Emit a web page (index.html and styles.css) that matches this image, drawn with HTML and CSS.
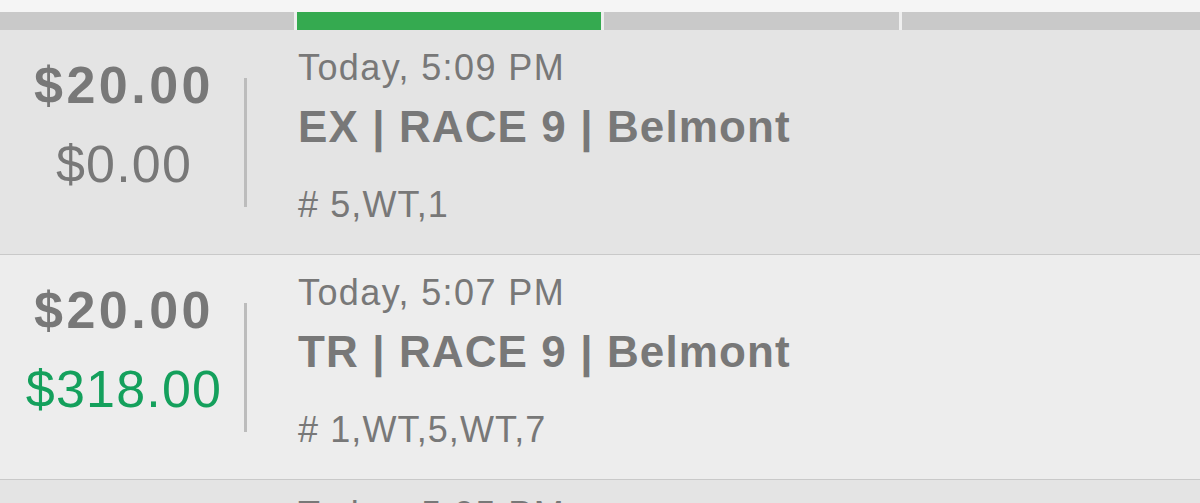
FILE: index.html
```html
<!DOCTYPE html>
<html lang="en">
  <head>
    <meta charset="UTF-8" />
    <meta name="viewport" content="width=device-width, initial-scale=1.0" />
    <title>My Wagers</title>
    <link rel="stylesheet" href="styles.css">
  </head>
  <body>
    <div class="wrapper">
      <div class="progress">
        <span class="step"></span>
        <span class="step active"></span>
        <span class="step"></span>
        <span class="step"></span>
      </div>

      <ul class="wager-list">
        <li class="wager dark">
          <div class="amounts">
            <div class="stake">$20.00</div>
            <div class="payout">$0.00</div>
          </div>
          <div class="divider"></div>
          <div class="details">
            <div class="time">Today, 5:09 PM</div>
            <div class="title">EX | RACE 9 | Belmont</div>
            <div class="picks"># 5,WT,1</div>
          </div>
        </li>
        <li class="wager">
          <div class="amounts">
            <div class="stake">$20.00</div>
            <div class="payout win">$318.00</div>
          </div>
          <div class="divider"></div>
          <div class="details">
            <div class="time">Today, 5:07 PM</div>
            <div class="title">TR | RACE 9 | Belmont</div>
            <div class="picks"># 1,WT,5,WT,7</div>
          </div>
        </li>
        <li class="wager dark next">
          <div class="amounts">
            <div class="stake">$20.00</div>
            <div class="payout">$0.00</div>
          </div>
          <div class="divider"></div>
          <div class="details">
            <div class="time">Today, 5:05 PM</div>
            <div class="title">EX | RACE 8 | Belmont</div>
            <div class="picks"># 3,WT,2</div>
          </div>
        </li>
      </ul>
    </div>
  </body>
</html>
```

FILE: styles.css
```css
html,
body {
  margin: 0;
  height: 100%;
  overflow: hidden;
}
body {
  background-color: #f5f5f5;
  font-family: "Liberation Sans", Arial, Helvetica, sans-serif;
  color: #787878;
}

/* top steps */
.progress {
  display: grid;
  grid-template-columns: 294px 304px 295px 1fr;
  column-gap: 3px;
  margin-top: 12px;
  height: 18px;
  background-color: #efefef;
}
.progress > .step {
  background-color: #c9c9c9;
}
.progress > .step.active {
  background-color: #35aa50;
}

/* wagers */
.wager-list {
  list-style: none;
  margin: 0;
  padding: 0;
}
.wager-list > .wager {
  display: flex;
  height: 224px;
  background-color: #ededed;
  border-bottom: 1px solid #c9c9c9;
}
.wager-list > .wager.dark {
  background-color: #e4e4e4;
}

.wager > .amounts {
  width: 240px;
  padding-left: 4px;
  padding-top: 27px;
  text-align: center;
}
.wager > .amounts > .stake {
  font-size: 52px;
  line-height: 56px;
  font-weight: bold;
  letter-spacing: 3.5px;
}
.wager > .amounts > .payout {
  margin-top: 23px;
  font-size: 52px;
  line-height: 56px;
  letter-spacing: 1.2px;
}
.wager > .amounts > .payout.win {
  color: #14a05c;
}

.wager > .divider {
  width: 3px;
  height: 129px;
  margin-top: 48px;
  background-color: #bcbcbc;
}

.wager > .details {
  padding-left: 51px;
  padding-top: 18px;
}
.wager.next > .details {
  padding-top: 15px;
}
.wager > .details > .time {
  font-size: 36px;
  line-height: 40px;
  letter-spacing: 1.4px;
}
.wager > .details > .title {
  margin-top: 14px;
  font-size: 44px;
  line-height: 50px;
  font-weight: bold;
  letter-spacing: 1.1px;
}
.wager > .details > .picks {
  margin-top: 33px;
  font-size: 36px;
  line-height: 40px;
  letter-spacing: 1.1px;
}
```
